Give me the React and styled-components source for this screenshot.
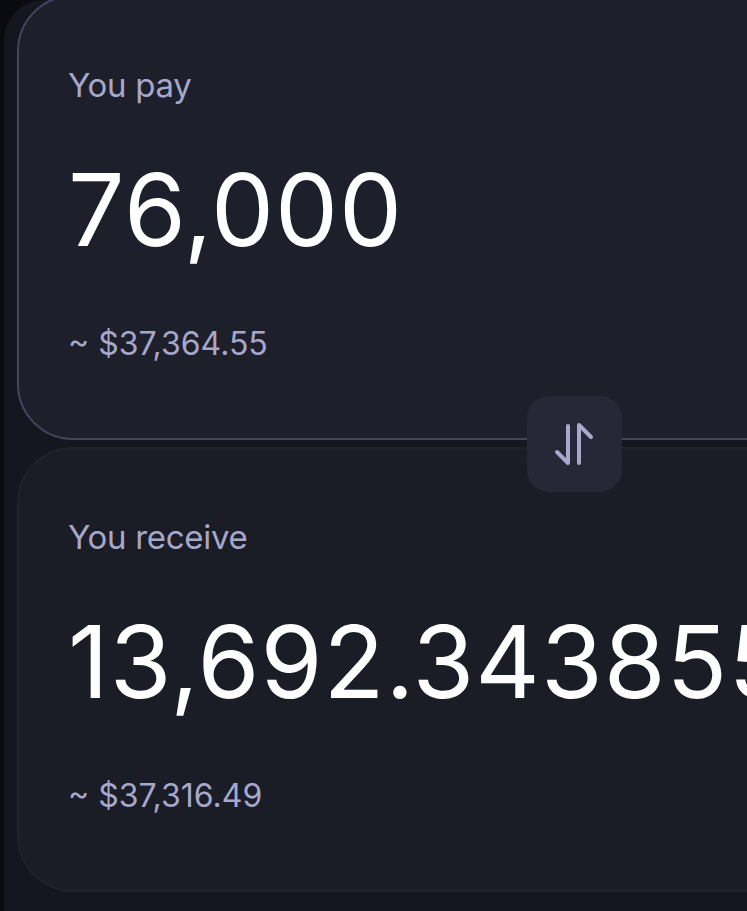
import React from 'react'
import styled, { createGlobalStyle } from 'styled-components'

const GlobalStyle = createGlobalStyle`
  html, body {
    margin: 0;
    padding: 0;
    background: #0a0b11;
    overflow: hidden;
  }
  body {
    font-family: Inter, "Noto Sans", sans-serif;
  }
`

const Panel = styled.div`
  margin-left: 4px;
  height: 911px;
  padding-left: 13px;
  background: #141620;
  border-top-left-radius: 40px;
  overflow: hidden;
`

const Stack = styled.div`
  position: relative;
  display: flex;
  flex-direction: column;
  gap: 7px;
  width: 1114px;
  margin-top: -5px;
`

const Card = styled.section`
  box-sizing: border-box;
  height: 445px;
  padding: 68px 0 0 49px;
  border-radius: 56px;
  background: ${p => (p.active ? '#1d1f2b' : '#1a1c26')};
  border: 2px solid ${p => (p.active ? '#44465e' : '#20222e')};
  display: flex;
  flex-direction: column;
`

const Label = styled.div`
  font-size: 33px;
  line-height: 40px;
  color: #a7a7ca;
  letter-spacing: -0.3px;
`

const Amount = styled.div`
  margin-top: 45px;
  font-size: 100px;
  line-height: 120px;
  font-weight: 400;
  color: #ffffff;
  letter-spacing: 1px;
  white-space: nowrap;
`

const Fiat = styled.div`
  margin-top: 54px;
  font-size: 32px;
  line-height: 40px;
  color: #a7a7ca;
  letter-spacing: 0;
`

const SwapButton = styled.button`
  position: absolute;
  left: 510px;
  top: 401px;
  width: 95px;
  height: 96px;
  border: none;
  border-radius: 22px;
  background: #262837;
  padding: 0;
  display: flex;
  align-items: center;
  justify-content: center;
  cursor: pointer;
`

const SwapIcon = () => (
  <svg width="95" height="96" viewBox="0 0 95 96" fill="none"
    stroke="#a9a8cc" strokeWidth="4" strokeLinecap="round" strokeLinejoin="round">
    <path d="M41 30 V67 L30 56" />
    <path d="M52 67 V29 L64 41" />
  </svg>
)

const Side = ({ label, amount, fiat, active }) => (
  <Card active={active}>
    <Label>{label}</Label>
    <Amount>{amount}</Amount>
    <Fiat>{fiat}</Fiat>
  </Card>
)

const App = () => {
  return (
    <>
      <GlobalStyle />
      <Panel>
        <Stack>
          <Side active label="You pay" amount="76,000" fiat="~ $37,364.55" />
          <Side label="You receive" amount="13,692.343855" fiat="~ $37,316.49" />
          <SwapButton aria-label="Swap">
            <SwapIcon />
          </SwapButton>
        </Stack>
      </Panel>
    </>
  )
}

export default App
